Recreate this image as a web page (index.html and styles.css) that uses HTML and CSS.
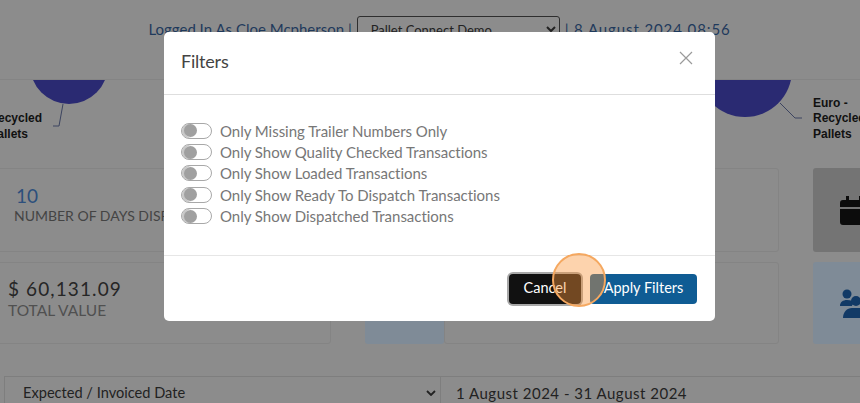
FILE: index.html
```html
<!DOCTYPE html>
<html lang="en">
<head>
    <meta charset="UTF-8">
    <title>Filters</title>
    <link rel="stylesheet" href="styles.css">
</head>
<body>
    <div class="page">
        <div class="topbar">
            <span>Logged In As Cloe Mcpherson |</span>
            <select class="company"><option>Pallet Connect Demo</option></select>
            <span class="topbar-date">| 8 August 2024 08:56</span>
        </div>

        <svg class="charts" width="860" height="88" viewBox="0 0 860 88">
            <circle cx="69" cy="-15" r="39" fill="#2a2a72"/>
            <polyline points="63,24 59,46 53,46" fill="none" stroke="#3c4460"/>
            <text class="chart-label" x="42" y="42" text-anchor="end">Recycled</text>
            <text class="chart-label" x="28" y="58" text-anchor="end">Pallets</text>
            <circle cx="745" cy="-10" r="47" fill="#2a2a72"/>
            <polyline points="780,23 795,38 802,38" fill="none" stroke="#3c4460"/>
            <text class="chart-label" x="813" y="27">Euro -</text>
            <text class="chart-label" x="813" y="42">Recycled</text>
            <text class="chart-label" x="813" y="58">Pallets</text>
        </svg>

        <div class="cards">
            <div class="card card-days">
                <div class="stat-blue">10</div>
                <div class="stat-label">NUMBER OF DAYS DISPLAYED</div>
            </div>
            <div class="tile tile-hidden"></div>
            <div class="card"></div>
            <div class="tile tile-dark">
                <svg width="28" height="29" viewBox="0 0 28 29"><path d="M6 0h3v4h10V0h3v4h3a3 3 0 0 1 3 3v4H0V7a3 3 0 0 1 3-3h3zM0 13h28v13a3 3 0 0 1-3 3H3a3 3 0 0 1-3-3z" fill="#0c0c0c"/></svg>
            </div>
            <div class="card card-value">
                <div class="stat-value">$ 60,131.09</div>
                <div class="stat-total">TOTAL VALUE</div>
            </div>
            <div class="tile tile-blue"></div>
            <div class="card"></div>
            <div class="tile tile-blue">
                <svg width="28" height="29" viewBox="0 0 28 29" fill="#123a66"><circle cx="7" cy="5" r="4.5"/><path d="M0 17c0-4 3-6 7-6s6 1 7 3c-1 1-2 2-2 3z"/><circle cx="16" cy="12" r="5"/><path d="M3 29c0-6 4-10 9-10h8c5 0 8 4 8 10z"/></svg>
            </div>
        </div>

        <div class="filterbar">
            <div class="date-type">
                <span>Expected / Invoiced Date</span>
                <svg width="10" height="6" viewBox="0 0 10 6"><path d="M1 1l4 4 4-4" fill="none" stroke="#222" stroke-width="1.8"/></svg>
            </div>
            <div class="date-range">1 August 2024 - 31 August 2024</div>
        </div>
    </div>

    <div class="overlay">
        <div class="modal">
            <div class="modal-header">
                <h2>Filters</h2>
                <svg class="close" width="14" height="14" viewBox="0 0 14 14"><path d="M1 1l12 12M13 1L1 13" stroke="#9a9a9a" stroke-width="1.2"/></svg>
            </div>
            <div class="modal-body">
                <label class="switch-row"><span class="switch"></span>Only Missing Trailer Numbers Only</label>
                <label class="switch-row"><span class="switch"></span>Only Show Quality Checked Transactions</label>
                <label class="switch-row"><span class="switch"></span>Only Show Loaded Transactions</label>
                <label class="switch-row"><span class="switch"></span>Only Show Ready To Dispatch Transactions</label>
                <label class="switch-row"><span class="switch"></span>Only Show Dispatched Transactions</label>
            </div>
            <div class="modal-footer">
                <button class="btn btn-cancel">Cancel</button>
                <button class="btn btn-apply">Apply Filters</button>
            </div>
        </div>
        <div class="click-marker"></div>
    </div>
</body>
</html>
```

FILE: styles.css
```css
html, body {
    margin: 0;
    height: 403px;
    overflow: hidden;
}

body {
    position: relative;
    background-color: #8c8c8c;
    font-family: 'Lato', sans-serif;
}

.page {
    width: 860px;
    height: 403px;
    overflow: hidden;
}

.topbar {
    height: 80px;
    border-bottom: 1px solid #848484;
    display: flex;
    justify-content: center;
    gap: 5px;
    padding: 16px 0 0 19px;
    box-sizing: border-box;
    font-size: 15px;
    line-height: 26px;
    color: #1f3a5c;
}

.topbar-date {
    letter-spacing: 0.9px;
}

.company {
    width: 203px;
    height: 27px;
    background: #8c8c8c;
    border: 1px solid #2e2e2e;
    border-radius: 3px;
    font-family: 'Lato', sans-serif;
    font-size: 13px;
    color: #222;
    padding-left: 9px;
}

.charts {
    display: block;
}

.chart-label {
    font-family: 'Liberation Sans', sans-serif;
    font-size: 12px;
    font-weight: bold;
    fill: #111;
}

.cards {
    display: grid;
    grid-template-columns: 331px 113px 335px 113px;
    grid-template-rows: 84px 82px;
    row-gap: 10px;
}

.card {
    border: 1px solid #848484;
    border-radius: 3px;
    box-sizing: border-box;
}

.card-days,
.card-value {
    margin-left: -4px;
    white-space: nowrap;
    overflow: hidden;
}

.card-days {
    padding: 16px 0 0 17px;
}

.card-value {
    padding: 14px 0 0 11px;
}

.tile {
    margin-left: 34px;
    border-radius: 3px;
    display: flex;
    align-items: center;
    padding-left: 27px;
    box-sizing: border-box;
}

.tile-dark {
    background: #747474;
}

.tile-blue {
    background: #7f8b97;
}

.stat-blue {
    margin-left: 2px;
    font-size: 19px;
    line-height: 22px;
    color: #2d4f7c;
}

.stat-value {
    font-size: 19px;
    line-height: 24px;
    letter-spacing: 1.1px;
    color: #262626;
}

.stat-label {
    font-size: 14px;
    line-height: 18px;
    color: #444;
}

.stat-total {
    font-size: 15.5px;
    line-height: 18px;
    color: #505050;
}

.filterbar {
    display: flex;
    margin: 32px 0 0 4px;
    height: 40px;
    border-top: 1px solid #7e7e7e;
    font-size: 14.6px;
    color: #222;
}

.date-type {
    width: 437px;
    border-left: 1px solid #7e7e7e;
    border-right: 1px solid #7e7e7e;
    box-sizing: border-box;
    display: flex;
    justify-content: space-between;
    padding: 7px 4px 0 18px;
}

.date-type svg {
    margin-top: 6px;
}

.date-range {
    padding: 7px 0 0 15px;
    font-size: 15px;
    letter-spacing: 0.5px;
}

.overlay {
    position: absolute;
    inset: 0;
}

.modal {
    position: absolute;
    left: 164px;
    top: 32px;
    width: 551px;
    height: 289px;
    background: #fff;
    border-radius: 5px;
    display: flex;
    flex-direction: column;
}

.modal-header {
    height: 63px;
    flex: none;
    box-sizing: border-box;
    border-bottom: 1px solid #dedede;
    display: flex;
    justify-content: space-between;
    padding: 0 22px 0 17px;
}

.modal-header h2 {
    margin: 17px 0 0;
    font-size: 18px;
    line-height: 24px;
    font-weight: 400;
    letter-spacing: -0.2px;
    color: #444;
}

.close {
    margin-top: 19px;
}

.modal-body {
    height: 161px;
    flex: none;
    box-sizing: border-box;
    border-bottom: 1px solid #e6e6e6;
    padding: 25px 0 0 17px;
}

.switch-row {
    display: flex;
    align-items: center;
    gap: 8px;
    height: 21.4px;
    font-size: 15px;
    letter-spacing: -0.03px;
    color: #777;
}

.switch {
    position: relative;
    width: 29px;
    height: 14px;
    border: 1.5px solid #a8a8a8;
    border-radius: 9px;
    background: #fff;
    box-shadow: inset 3px 0 0 #c8c8c8;
}

.switch::before {
    content: "";
    position: absolute;
    left: 2px;
    top: 0.5px;
    width: 13px;
    height: 13px;
    border-radius: 50%;
    background: #a0a0a0;
}

.modal-footer {
    flex: 1;
    display: flex;
    justify-content: flex-end;
    gap: 9px;
    padding: 18px 18px 0 0;
}

.btn {
    height: 30px;
    border: none;
    border-radius: 4px;
    color: #fff;
    font-family: 'Lato', sans-serif;
    font-size: 14.5px;
    box-sizing: border-box;
    padding: 0 0 3px;
}

.btn-cancel {
    width: 72px;
    background: #111;
    box-shadow: 0 0 0 2px #a8a8a8;
}

.btn-apply {
    width: 107px;
    background: #0f5c94;
}

/* orange ring showing the click */
.click-marker {
    position: absolute;
    left: 552px;
    top: 253px;
    width: 54px;
    height: 54px;
    box-sizing: border-box;
    border: 2px solid #f5a860;
    border-radius: 50%;
    background: rgba(250, 150, 60, 0.42);
}
```
